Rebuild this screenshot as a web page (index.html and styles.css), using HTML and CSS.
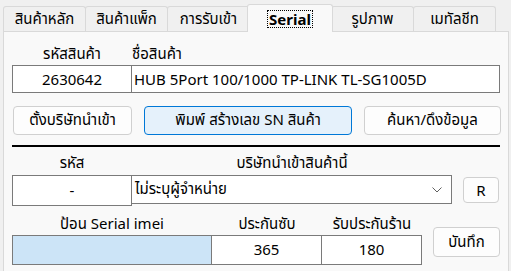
FILE: index.html
```html
<!DOCTYPE html>
<html>
<head>
    <title>Serial</title>
    <link rel="stylesheet" href="styles.css">
</head>
<body>
    <div class="tabs">
        <div class="tab">สินค้าหลัก</div>
        <div class="tab">สินค้าแพ็ก</div>
        <div class="tab">การรับเข้า</div>
        <div class="tab active"><span class="focus">Serial</span></div>
        <div class="tab">รูปภาพ</div>
        <div class="tab">เมทัลชีท</div>
    </div>

    <div class="panel">
        <div class="row-labels top-labels">
            <div class="lbl center">รหัสสินค้า</div>
            <div class="lbl">ชื่อสินค้า</div>
        </div>
        <div class="row-fields">
            <div class="box center">2630642</div>
            <div class="box name">HUB 5Port 100/1000 TP-LINK TL-SG1005D</div>
        </div>

        <div class="row-buttons">
            <button class="btn">ตั้งบริษัทนำเข้า</button>
            <button class="btn primary">พิมพ์ สร้างเลข SN สินค้า</button>
            <button class="btn">ค้นหา/ดึงข้อมูล</button>
        </div>

        <div class="divider"></div>

        <div class="row-labels supplier-labels">
            <div class="lbl center">รหัส</div>
            <div class="lbl center">บริษัทนำเข้าสินค้านี้</div>
        </div>
        <div class="row-supplier">
            <div class="box center tall">-</div>
            <div class="combo">
                <span>ไม่ระบุผู้จำหน่าย</span>
                <svg width="10" height="6" viewBox="0 0 10 6"><path d="M0.5 0.5 L5 5 L9.5 0.5" fill="none" stroke="#606060" stroke-width="1"/></svg>
            </div>
            <button class="btn small">R</button>
        </div>

        <div class="row-serial">
            <div class="lbl center">ป้อน Serial imei</div>
            <div class="lbl center">ประกันซับ</div>
            <div class="lbl center">รับประกันร้าน</div>
            <button class="btn save">บันทึก</button>
            <div class="box serial"></div>
            <div class="box center">365</div>
            <div class="box center">180</div>
        </div>
    </div>
</body>
</html>
```

FILE: styles.css
```css
body {
    margin: 0;
    background-color: #f0f0f0;
    font-family: "Noto Sans", "Noto Sans Thai", sans-serif;
    font-size: 15px;
    color: #000;
    width: 511px;
    height: 271px;
    overflow: hidden;
}

.tabs {
    display: flex;
    align-items: flex-end;
    padding-left: 3px;
    height: 31px;
}

.tab {
    width: 83px;
    height: 25px;
    box-sizing: border-box;
    border: 1px solid #d9d9d9;
    border-bottom: none;
    border-radius: 3px 3px 0 0;
    background-color: #f0f0f0;
    display: flex;
    justify-content: center;
    align-items: center;
    margin-right: -1px;
    white-space: nowrap;
}

.tab.active {
    width: 86px;
    height: 28px;
    margin-left: -2px;
    margin-right: -2px;
    margin-bottom: -1px;
    background-color: #f9f9f9;
    position: relative;
    z-index: 1;
    font-weight: bold;
}

.focus {
    border: 1px dotted #000;
    padding: 0 1px;
    line-height: 16px;
}

.panel {
    margin-left: 3px;
    width: 506px;
    height: 250px;
    box-sizing: border-box;
    border: 1px solid #d9d9d9;
    background-color: #f9f9f9;
    padding: 0 0 0 8px;
}

.lbl {
    height: 17px;
    line-height: 17px;
    white-space: nowrap;
}

.center {
    text-align: center;
}

.row-labels {
    display: grid;
    grid-template-columns: 120px 368px;
}

.top-labels {
    margin-top: 13px;
}

.row-fields {
    display: grid;
    grid-template-columns: 120px 368px;
    margin-top: 3px;
}

.box {
    height: 28px;
    line-height: 26px;
    box-sizing: border-box;
    border: 1px solid #7a7a7a;
    background-color: #fff;
    white-space: nowrap;
}

.box + .box {
    border-left: none;
}

.name {
    padding-left: 2px;
}

.row-buttons {
    display: grid;
    grid-template-columns: 119px 208px 137px;
    column-gap: 12px;
    margin-top: 13px;
    padding-left: 1px;
}

.btn {
    height: 29px;
    font-family: inherit;
    font-size: 15px;
    color: #000;
    background-color: #fdfdfd;
    border: 1px solid #d0d0d0;
    border-radius: 4px;
    padding: 0;
    white-space: nowrap;
}

.btn.primary {
    background-color: #e5f1fb;
    border-color: #0078d7;
}

.divider {
    margin-top: 10px;
    width: 488px;
    height: 0;
    border-top: 2px solid #000;
}

.supplier-labels {
    margin-top: 7px;
    grid-template-columns: 120px 320px;
}

.row-supplier {
    display: flex;
    align-items: flex-start;
    margin-top: 4px;
}

.box.tall {
    width: 120px;
    height: 31px;
    line-height: 28px;
}

.combo {
    width: 320px;
    height: 29px;
    box-sizing: border-box;
    border: 1px solid #7a7a7a;
    border-left: none;
    background-color: #fff;
    display: flex;
    align-items: center;
    justify-content: space-between;
    padding: 0 9px 0 3px;
}

.btn.small {
    width: 36px;
    height: 26px;
    margin-left: 11px;
    margin-top: 2px;
}

.row-serial {
    display: grid;
    grid-template-columns: 200px 110px 100px 67px;
    grid-template-rows: 20px 30px;
    margin-top: 9px;
}

.row-serial .box {
    height: 30px;
}

.box.serial {
    background-color: #cce4f7;
}

.btn.save {
    grid-column: 4;
    grid-row: 1 / span 2;
    margin-left: 11px;
    margin-top: 12px;
    width: 67px;
    height: 30px;
}
```
